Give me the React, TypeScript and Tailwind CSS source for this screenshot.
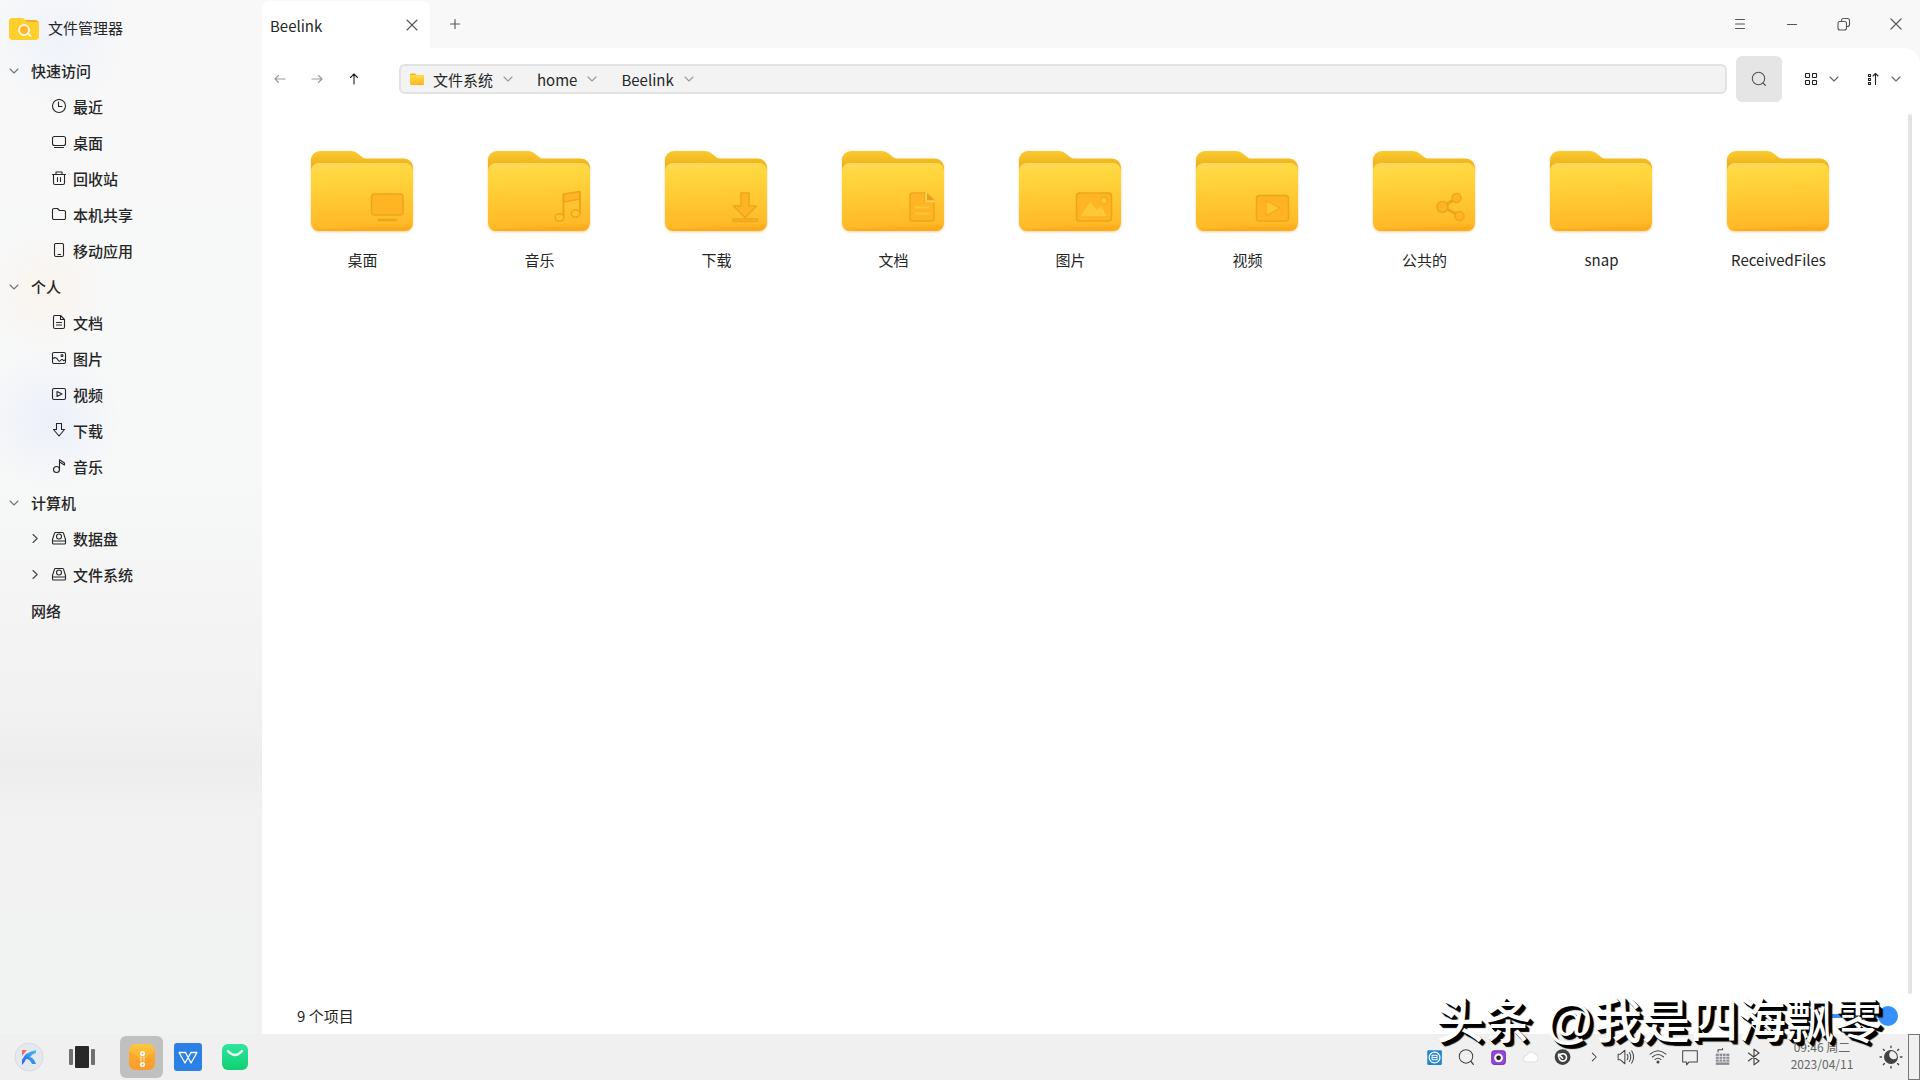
import React from 'react';

type IconProps = { className?: string; children: React.ReactNode };

const Icon: React.FC<IconProps> = ({ className = 'size-4', children }) => (
  <svg viewBox="0 0 16 16" fill="none" stroke="currentColor" strokeWidth="1.1" strokeLinecap="round" strokeLinejoin="round" className={`shrink-0 ${className}`} aria-hidden="true">
    {children}
  </svg>
);

const ChevronDown = ({ className = 'size-4 text-[#777]' }: { className?: string }) => (
  <Icon className={className}><path d="M4 6l4 4 4-4" /></Icon>
);

const ChevronRight = ({ className = 'size-4' }: { className?: string }) => (
  <Icon className={className}><path d="M6 3.500l4.200 4-4.200 4" /></Icon>
);

const placeIcons: Record<string, React.ReactNode> = {
  recent: <><circle cx="8" cy="7" r="6.500" /><path d="M7.500 3v4.500H11" /></>,
  desktop: <><rect x="1.500" y="1.500" width="13" height="9" rx="2" /><path d="M3.500 12.500h9" /></>,
  trash: <><path d="M1.500 3.500h13M5 3.500V1h6v2.500M2.500 3.500V12a1.500 1.500 0 0 0 1.500 1.500h8a1.500 1.500 0 0 0 1.500-1.500V3.500M6.500 6.500v4M9.500 6.500v4" /></>,
  share: <path d="M1.500 3a1.500 1.500 0 0 1 1.500-1.500h3.500l2 2H13A1.500 1.500 0 0 1 14.500 5v6a1.500 1.500 0 0 1-1.500 1.500H3A1.500 1.500 0 0 1 1.500 11z" />,
  mobile: <><rect x="3.500" y="0.500" width="9" height="13" rx="1.500" /><path d="M7 11.500h2.500" /></>,
  document: <><path d="M9.500 0.500H4A1.500 1.500 0 0 0 2.500 2v10A1.500 1.500 0 0 0 4 13.500h8a1.500 1.500 0 0 0 1.500-1.500V4.500zM9.500 0.500v4h4M5.500 7.500h5M5.500 10h5" /></>,
  picture: <><rect x="1.500" y="1.500" width="13" height="11" rx="1.500" /><circle cx="11" cy="4.500" r="1" /><path d="M2 7.500c2-1.500 3.500-1 5 1.500.800 1.500 1.800 1.500 2.500.500 1-1.300 2-1.300 3 .200l2-1" /></>,
  video: <><rect x="1.500" y="1.500" width="13" height="11" rx="1.500" /><path d="M6 4.500l5 2.500-5 2.500z" /></>,
  download: <path d="M5.500 0.500h5v6h3L8 13 2.500 6.500h3z" />,
  music: <><circle cx="5.500" cy="10.500" r="3" /><path d="M8.500 10.500V0.800l5 3.200v2l-5-3" /></>,
  disk: <><path d="M4.500 1.500h7a1 1 0 0 1 1 .700l2 6.300V12a1 1 0 0 1-1 1h-11a1 1 0 0 1-1-1V8.500l2-6.300a1 1 0 0 1 1-.700zM1.500 10h13" /><circle cx="8" cy="5.500" r="2.500" /></>,
};

interface Place {
  label: string;
  icon: string;
  expandable?: boolean;
}

const sections: { title: string; items: Place[] }[] = [
  {
    title: '快速访问',
    items: [
      { label: '最近', icon: 'recent' },
      { label: '桌面', icon: 'desktop' },
      { label: '回收站', icon: 'trash' },
      { label: '本机共享', icon: 'share' },
      { label: '移动应用', icon: 'mobile' },
    ],
  },
  {
    title: '个人',
    items: [
      { label: '文档', icon: 'document' },
      { label: '图片', icon: 'picture' },
      { label: '视频', icon: 'video' },
      { label: '下载', icon: 'download' },
      { label: '音乐', icon: 'music' },
    ],
  },
  {
    title: '计算机',
    items: [
      { label: '数据盘', icon: 'disk', expandable: true },
      { label: '文件系统', icon: 'disk', expandable: true },
    ],
  },
];

const folders = [
  { label: '桌面', emblem: 'desktop' },
  { label: '音乐', emblem: 'music' },
  { label: '下载', emblem: 'download' },
  { label: '文档', emblem: 'document' },
  { label: '图片', emblem: 'picture' },
  { label: '视频', emblem: 'video' },
  { label: '公共的', emblem: 'share' },
  { label: 'snap', emblem: '' },
  { label: 'ReceivedFiles', emblem: '' },
];

// Coordinates are those of the folder drawing
const emblems: Record<string, React.ReactNode> = {
  desktop: <><rect x="65.500" y="50" width="31.500" height="21" rx="3" /><path d="M73 76h17" strokeWidth="2.500" strokeLinecap="round" /></>,
  music: <>
    <path d="M80.500 50l16.500-2.500V55l-16.500 3z" />
    <path d="M80.500 50v23M97 47.500v22" fill="none" strokeWidth="2" />
    <ellipse cx="76.500" cy="73.500" rx="4.300" ry="3.800" fill="#ffc42a" />
    <ellipse cx="92.500" cy="69.500" rx="4.300" ry="3.800" fill="#ffc42a" />
  </>,
  download: <><path d="M81 49h8v13h7.500L85 73.500 73.500 62H81z" /><rect x="73" y="75" width="24.500" height="2.500" /></>,
  document: <>
    <path d="M75.500 49H88v8.500h9V74.500a2.500 2.500 0 0 1-2.500 2.500h-19a2.500 2.500 0 0 1-2.500-2.500v-23a2.500 2.500 0 0 1 2.500-2.500z" />
    <path d="M90 49l7.500 7H90z" stroke="none" fill="#e9a012" />
    <path d="M89 48.500V57.500H98" fill="none" stroke="#ffd65a" />
    <path d="M78 63.500h14M78 69.500h14" stroke="#ffc735" strokeWidth="2" />
  </>,
  picture: <>
    <rect x="62.500" y="49" width="35" height="28" rx="3" />
    <path d="M66.500 72l9.500-14 7 8 4-4 5.500 10z" fill="#ffc735" stroke="none" />
    <circle cx="90" cy="56.500" r="3.300" fill="#ffc735" stroke="#f7ad1c" />
  </>,
  video: <><rect x="65.500" y="51.500" width="32" height="25.500" rx="3" /><path d="M75 56.500l14 7.500-14 8z" fill="#ffc735" stroke="#f7ad1c" /></>,
  share: <>
    <path d="M74.500 63l14-9M74.500 63l18 9" fill="none" strokeWidth="3" />
    <circle cx="74.500" cy="63" r="5.500" /><circle cx="88.500" cy="54" r="4.500" /><circle cx="91.500" cy="72" r="4.500" />
  </>,
};

const FolderGradients = () => (
  <svg className="absolute size-0" aria-hidden="true">
    <defs>
      <linearGradient id="folderBack" x1="0" y1="0" x2="0" y2="1">
        <stop offset="0" stopColor="#fbcb2f" />
        <stop offset="0.220" stopColor="#eeb31d" />
        <stop offset="1" stopColor="#e9a512" />
      </linearGradient>
      <linearGradient id="folderFront" x1="0" y1="0" x2="0.060" y2="1">
        <stop offset="0" stopColor="#ffd95c" />
        <stop offset="0.150" stopColor="#ffd83f" />
        <stop offset="0.940" stopColor="#ffba28" />
        <stop offset="1" stopColor="#fbab1b" />
      </linearGradient>
    </defs>
  </svg>
);

const FolderArt = ({ emblem }: { emblem: string }) => (
  <svg viewBox="1 0 112 92" className="h-[92px] w-[112px] drop-shadow-[0_1px_1px_rgba(230,160,30,0.45)]" aria-hidden="true">
    <path d="M5 16a9 9 0 0 1 9-9h31q4 0 6.500 2.500L56 13q1.500 1.500 4 1.500h38a9 9 0 0 1 9 9V70H5z" fill="url(#folderBack)" />
    <rect x="5" y="19" width="102" height="68" rx="8" fill="url(#folderFront)" />
    <g fill="#ffb424" stroke="#eda51c" strokeWidth="1.500" strokeLinejoin="round">{emblems[emblem]}</g>
  </svg>
);

const Sidebar = () => (
  <aside className="w-[262px] shrink-0 text-[15px] font-medium text-[#262626]">
    <header className="flex h-[53px] items-center gap-2 pt-1 pl-2 font-normal">
      <svg viewBox="0 0 32 24" className="h-6 w-8" aria-hidden="true">
        <path d="M1 5a4 4 0 0 1 4-4h9l3 2h10a4 4 0 0 1 4 4v10H1z" fill="#f0ad38" />
        <path d="M1 5a4 4 0 0 1 4-4h9q2 0 3 2t3 2h11v14a4 4 0 0 1-4 4H5a4 4 0 0 1-4-4z" fill="#ffcf2c" />
        <circle cx="16" cy="13" r="5" fill="#ffb52c" stroke="#fff6dc" strokeWidth="2" />
        <path d="M20 16.500l2.500 2.500" stroke="#fff6dc" strokeWidth="2" strokeLinecap="round" />
      </svg>
      <h1>文件管理器</h1>
    </header>
    <nav aria-label="位置">
      {sections.map((section) => (
        <section key={section.title}>
          <button className="flex h-9 w-full items-center gap-[9px] pl-1.5">
            <ChevronDown />
            {section.title}
          </button>
          <ul>
            {section.items.map((item) => (
              <li key={item.label}>
                <button className="flex h-9 w-full items-center gap-1.5 pl-[27px]">
                  <span className="w-[18px]">{item.expandable && <ChevronRight className="size-4 text-[#444]" />}</span>
                  <Icon>{placeIcons[item.icon]}</Icon>
                  {item.label}
                </button>
              </li>
            ))}
          </ul>
        </section>
      ))}
      <button className="flex h-9 w-full items-center pl-[31px]">网络</button>
    </nav>
  </aside>
);

const TitleBar = () => (
  <header className="flex h-12 items-center text-[#555]">
    <div role="tablist" className="flex h-full items-end">
      <div className="flex h-[47px] w-[168px] items-center justify-between rounded-t-lg bg-white pr-2 pl-2 text-[15px] text-[#262626]">
        <button role="tab" aria-selected="true" className="pt-1">Beelink</button>
        <button aria-label="关闭标签页"><Icon className="size-5 text-[#555]"><path d="M4 4l8 8M12 4l-8 8" strokeWidth="0.900" /></Icon></button>
      </div>
    </div>
    <button aria-label="新建标签页" className="ml-4"><Icon className="size-[18px]"><path d="M8 4v8M4 8h8" strokeWidth="1" /></Icon></button>
    <div className="ml-auto flex gap-1">
      <button aria-label="菜单" className="flex h-12 w-12 items-center justify-center"><Icon><path d="M3.500 3.500h9M3.500 8h9M3.500 12.500h9" /></Icon></button>
      <button aria-label="最小化" className="flex h-12 w-12 items-center justify-center"><Icon><path d="M3.500 8.500h9" /></Icon></button>
      <button aria-label="还原" className="flex h-12 w-12 items-center justify-center">
        <Icon>
          <rect x="2" y="5.500" width="8.500" height="8.500" rx="2" />
          <path d="M5.500 5.500V4.500a2 2 0 0 1 2-2H11.500a2 2 0 0 1 2 2V8.500a2 2 0 0 1-2 2h-1" />
        </Icon>
      </button>
      <button aria-label="关闭" className="flex h-12 w-12 items-center justify-center"><Icon><path d="M3 3l10 10M13 3L3 13" /></Icon></button>
    </div>
  </header>
);

const Toolbar = () => (
  <div className="flex h-[62px] items-center pr-4 pl-2.5">
    <div className="flex gap-[21px]">
      <button aria-label="后退" disabled className="text-[#999]"><Icon><path d="M3 8h10M6.500 4.500L3 8l3.500 3.500" /></Icon></button>
      <button aria-label="前进" disabled className="text-[#999]"><Icon><path d="M3 8h10M9.500 4.500L13 8l-3.500 3.500" /></Icon></button>
      <button aria-label="上一级" className="text-[#222]"><Icon><path d="M8 3v10M4.500 6.500L8 3l3.500 3.500" /></Icon></button>
    </div>
    <nav aria-label="路径" className="ml-[37px] flex h-[30px] flex-1 items-center rounded-md border-2 border-[#e2e2e2] bg-[#f3f3f3] pl-2 text-[15px] text-[#262626]">
      <svg viewBox="0 0 16 12" className="mr-2 h-3 w-4" aria-hidden="true">
        <path d="M1 2a1.500 1.500 0 0 1 1.500-1.500H6L8 2h6.500V10H1z" fill="#efb320" />
        <rect x="1" y="2" width="14" height="10" rx="1.500" fill="url(#folderFront)" />
      </svg>
      <a href="#root" className="pt-0.5">文件系统</a>
      <button aria-label="文件系统 子目录" className="ml-[7px]"><ChevronDown className="size-4 text-[#999]" /></button>
      <a href="#home" className="ml-[21px] pt-0.5">home</a>
      <button aria-label="home 子目录" className="ml-[7px]"><ChevronDown className="size-4 text-[#999]" /></button>
      <a href="#beelink" className="ml-[21px] pt-0.5">Beelink</a>
      <button aria-label="Beelink 子目录" className="ml-[7px]"><ChevronDown className="size-4 text-[#999]" /></button>
    </nav>
    <button aria-label="搜索" className="ml-[9px] flex size-[46px] items-center justify-center rounded-md bg-[#e5e5e5] text-[#555]">
      <Icon><circle cx="7.500" cy="7.500" r="6.200" /><path d="M12 12l2.500 2.500" /></Icon>
    </button>
    <button aria-label="视图" className="ml-[21px] flex items-center gap-[7px] text-[#222]">
      <Icon>
        <rect x="2.500" y="2.500" width="4" height="4" rx="0.500" /><rect x="9.500" y="2.500" width="4" height="4" rx="0.500" />
        <rect x="2.500" y="9.500" width="4" height="4" rx="0.500" /><rect x="9.500" y="9.500" width="4" height="4" rx="0.500" />
      </Icon>
      <ChevronDown className="size-4 text-[#666]" />
    </button>
    <button aria-label="排序" className="ml-[23px] flex items-center gap-[7px] text-[#222]">
      <Icon>
        <rect x="3.500" y="3.500" width="2" height="2" /><rect x="3.500" y="7.500" width="2" height="2" /><rect x="3.500" y="11.500" width="2" height="2" />
        <path d="M10.500 13.500v-11M8 5l2.500-2.500L13 5" />
      </Icon>
      <ChevronDown className="size-4 text-[#666]" />
    </button>
  </div>
);

const Taskbar = () => (
  <footer className="flex h-[46px] shrink-0 items-center bg-[#f0f0f0] pl-3.5 text-[#444]">
    <button aria-label="开始菜单">
      <svg viewBox="0 0 30 30" className="size-[30px]" aria-hidden="true">
        <defs>
          <linearGradient id="startBlue" x1="0" y1="1" x2="1" y2="0"><stop offset="0" stopColor="#2b5be8" /><stop offset="1" stopColor="#45c4f4" /></linearGradient>
        </defs>
        <circle cx="15" cy="15" r="14" fill="#e6e8f0" stroke="#d8dae2" />
        <path d="M8 8h5l-5 6z" fill="#f2705a" />
        <path d="M8 23v-5q3-8 14-10v3q-4 1-6 4 4 1 6 7h-4q-2-5-6-5-1 3-4 6z" fill="url(#startBlue)" />
      </svg>
    </button>
    <button aria-label="任务视图" className="ml-6">
      <svg viewBox="0 0 28 24" className="h-6 w-7" aria-hidden="true">
        <rect x="1" y="4" width="4" height="16" rx="1" fill="#6f6f6f" /><rect x="7" y="1" width="14" height="22" rx="1" fill="#262829" /><rect x="23" y="4" width="4" height="16" rx="1" fill="#6f6f6f" />
      </svg>
    </button>
    <button aria-label="文件管理器" className="ml-6 flex h-[42px] w-[43px] items-center justify-center rounded-md bg-[#c0c0c0]">
      <svg viewBox="0 0 26 26" className="size-[26px]" aria-hidden="true">
        <defs><linearGradient id="filesOrange" x1="0" y1="0" x2="0" y2="1"><stop offset="0" stopColor="#fdc83b" /><stop offset="1" stopColor="#fb9c34" /></linearGradient></defs>
        <rect width="26" height="26" rx="7" fill="url(#filesOrange)" />
        <path d="M0 7l13 9 13-9v12a7 7 0 0 1-7 7H7a7 7 0 0 1-7-7z" fill="#fb9b22" opacity="0.450" />
        <g fill="none" stroke="#fff" strokeWidth="1.500"><circle cx="13.500" cy="9.500" r="1.800" /><circle cx="13.500" cy="20.500" r="1.800" /><path d="M12 12.500v5M15 12.500v5" strokeWidth="0.800" /></g>
      </svg>
    </button>
    <button aria-label="WPS 文字" className="ml-[11px]">
      <svg viewBox="0 0 28 28" className="size-7" aria-hidden="true">
        <rect width="28" height="28" rx="3" fill="#2a80e4" />
        <path d="M5 9.500h6.500l5.500 10.500 6-10.500h-6L11 20z" fill="none" stroke="#fff" strokeWidth="1.300" strokeLinejoin="round" />
      </svg>
    </button>
    <button aria-label="软件商店" className="ml-5">
      <svg viewBox="0 0 26 26" className="size-[26px]" aria-hidden="true">
        <defs><linearGradient id="storeGreen" x1="0" y1="0" x2="0" y2="1"><stop offset="0" stopColor="#2ee6a0" /><stop offset="1" stopColor="#10cf72" /></linearGradient></defs>
        <rect width="26" height="26" rx="6" fill="url(#storeGreen)" />
        <path d="M6 7q7 8 14 0" fill="none" stroke="#eafff4" strokeWidth="2.500" strokeLinecap="round" />
      </svg>
    </button>

    <div className="ml-auto flex items-center gap-3.5">
      <button aria-label="输入助手"><Icon className="size-[18px]"><rect x="2" y="2" width="13" height="13" rx="1" fill="#2285cf" stroke="none" /><circle cx="8.500" cy="8.500" r="4.800" stroke="#fff" /><path d="M6.300 6.500h4.400v4H6.300zM6.300 8.500h4.400" stroke="#fff" strokeWidth="0.900" /></Icon></button>
      <button aria-label="全局搜索"><Icon className="size-[18px]"><circle cx="8" cy="7.500" r="6" strokeWidth="0.900" /><path d="M12.500 12l2 2.500" /></Icon></button>
      <button aria-label="截图"><Icon className="size-[18px]"><rect x="2.500" y="2.500" width="12" height="12" rx="2.500" fill="#9a45d8" stroke="#7a3cc4" /><circle cx="8.500" cy="8.700" r="3" fill="#222" stroke="#fff" strokeWidth="1.800" /></Icon></button>
      <button aria-label="天气"><Icon className="size-[18px]"><path d="M5 12.500a3 3 0 0 1 0-6 4 4 0 0 1 7-1.500 3.800 3.800 0 0 1 0 7.500z" fill="#fdfdfd" stroke="#e3e3e3" /></Icon></button>
      <button aria-label="更新"><Icon className="size-[18px]"><circle cx="8.500" cy="8" r="7" fill="#3f4143" stroke="none" /><path d="M5.500 9a3.300 3.300 0 1 0 2-3.700M8.500 9L5 5.500M5 5.500v2.500M5 5.500h2.500" stroke="#fff" strokeWidth="1.400" /></Icon></button>
      <button aria-label="更多托盘图标"><Icon className="size-[18px]"><path d="M6.500 4.500L10 8l-3.500 3.500" strokeWidth="0.900" /></Icon></button>
      <button aria-label="音量"><Icon className="size-[18px]"><path d="M1 5.500h2L7 2v12l-4-3.500H1zM9 5.500q1.500 2.500 0 5M11 4q2.500 4 0 8M13 2.500q3.500 5.500 0 11" strokeWidth="0.900" /></Icon></button>
      <button aria-label="无线网络"><Icon className="size-[18px]"><path d="M1 5.500q7-6 14 0M3 8q5-4.500 10 0M5.300 10.300q2.700-2.500 5.400 0" strokeWidth="0.900" /><circle cx="8" cy="12.500" r="0.800" fill="currentColor" /></Icon></button>
      <button aria-label="通知"><Icon className="size-[18px]"><path d="M1.500 2.500h13v10H7l-2 2.500v-2.500H1.500z" strokeWidth="0.900" /></Icon></button>
      <button aria-label="键盘"><Icon className="size-[18px]"><path d="M4.500 3.500V1.500h4v-1" strokeWidth="0.900" /><rect x="2.500" y="5" width="12" height="10" fill="#8b8b95" stroke="none" /><path d="M2 7.500h13M2 10h13M2 12.500h13M5.500 5v7M8.500 5v7M11.500 5v7" stroke="#eee" strokeWidth="0.700" /></Icon></button>
      <button aria-label="蓝牙"><Icon className="size-[18px]"><path d="M3 4.500l9.500 7L8 15V1l4.500 3.500L3 11.500" strokeWidth="1" /></Icon></button>
    </div>
    <time dateTime="2023-04-11T09:46" className="ml-[27px] w-[64px] pb-1 text-center text-xs leading-[17px] text-[#666]">
      09:46 周二
      <br />
      2023/04/11
    </time>
    <button aria-label="亮度" className="ml-[25px]">
      <Icon className="size-6">
        <circle cx="8" cy="8" r="4.300" fill="#3f4143" stroke="none" /><circle cx="9.800" cy="6.500" r="3" fill="#f0f0f0" stroke="none" />
        <circle cx="8" cy="8" r="4.300" strokeWidth="0.700" />
        <path d="M8 .700v1M8 14.300v1M.700 8h1M14.300 8h1M2.900 2.900l.700.700M12.400 12.400l.700.700M2.900 13.100l.700-.700M12.400 3.600l.700-.700" strokeWidth="0.900" />
      </Icon>
    </button>
    <button aria-label="显示桌面" className="ml-[5px] h-full w-3 border border-[#777]" />
  </footer>
);

export default function App() {
  return (
    <div className="relative flex h-screen flex-col overflow-hidden font-['Noto_Sans_CJK_SC','Noto_Sans',sans-serif] text-[#262626]">
      <FolderGradients />
      <div className="flex min-h-0 flex-1 bg-[radial-gradient(circle_at_58px_40px,#eff3fb_0,transparent_70px),radial-gradient(circle_at_46px_292px,#faf4ee_0,transparent_60px),radial-gradient(circle_at_50px_420px,#ecf0fa_0,transparent_70px),linear-gradient(#f8f8f8_0,#f7f8f8_480px,#f3f3f3_640px,#f2f2f2_710px,#ededed_765px,#f2f2f2_820px,#f1f2f2_100%)]">
        <Sidebar />
        <div className="flex min-w-0 flex-1 flex-col">
          <TitleBar />
          <main className="flex min-h-0 flex-1 flex-col rounded-tr-2xl bg-white">
            <Toolbar />
            <div className="flex min-h-0 flex-1 pt-1 pr-2">
              <ul className="flex flex-1 flex-wrap content-start pt-[30px] pl-3">
                {folders.map((folder) => (
                  <li key={folder.label} className="w-[177px]">
                    <button className="flex w-full flex-col items-center gap-3 text-[15px] leading-6">
                      <FolderArt emblem={folder.emblem} />
                      {folder.label}
                    </button>
                  </li>
                ))}
              </ul>
              <div className="w-1 rounded-xs bg-[#e3e3e3]" />
            </div>
            <div className="flex h-10 items-center justify-between pt-1 pr-[22px] pl-[35px] text-[15px]">
              <p>9 个项目</p>
              <input
                type="range"
                aria-label="图标大小"
                defaultValue={100}
                className="h-1 w-[78px] appearance-none rounded-full bg-[#3d8ff7] [&::-webkit-slider-thumb]:size-5 [&::-webkit-slider-thumb]:appearance-none [&::-webkit-slider-thumb]:rounded-full [&::-webkit-slider-thumb]:bg-[#3790fa]"
              />
            </div>
          </main>
        </div>
      </div>
      <Taskbar />
      <p className="pointer-events-none absolute right-[38px] bottom-[22px] font-['Liberation_Sans','Noto_Sans_CJK_SC',sans-serif] text-5xl leading-[72px] font-medium whitespace-nowrap text-white [text-shadow:1px_1px_0_#000,2px_2px_0_#000,3px_3px_0_#000,4px_4px_1px_#000]">
        头条 @我是四海飘零
      </p>
    </div>
  );
}
